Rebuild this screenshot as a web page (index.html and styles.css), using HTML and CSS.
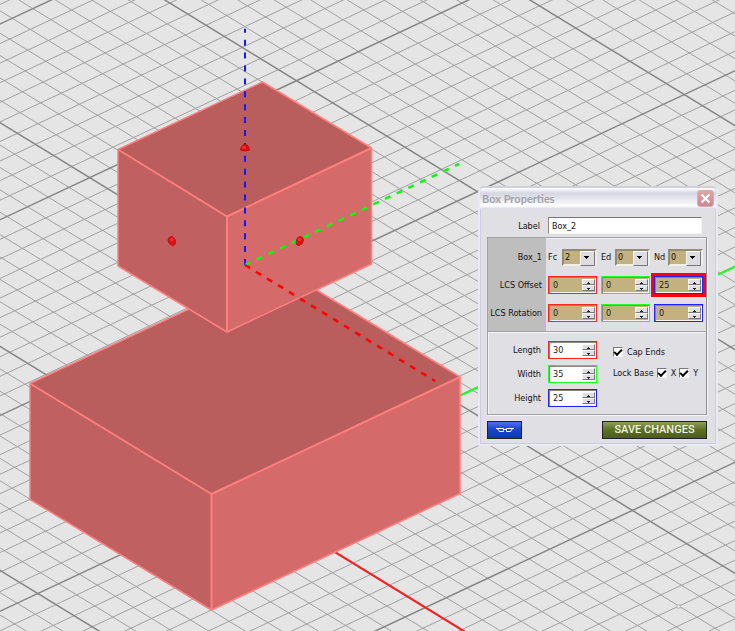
FILE: index.html
```html
<!DOCTYPE html>
<html lang="en">
<head>
<meta charset="utf-8">
<title>Box Properties</title>
<link rel="stylesheet" href="styles.css">
</head>
<body>
<svg class="scene" role="img" aria-label="Two boxes on a construction grid">
  <g transform="matrix(18.09 11.09 20.68 -9.7 89.7 177.7)">
    <path id="minor" class="minor"/>
    <path id="major" class="major"/>
  </g>
  <path class="axis-x" d="M245 497L735 797.4"/>
  <path class="axis-y" d="M425 412L1063 112.7"/>

  <polygon class="top" points="30,383.5 278.5,267 460,377 211.5,494"/>
  <polygon class="left" points="30,383.5 211.5,494 211.5,610 30,499.5"/>
  <polygon class="right" points="211.5,494 460,377 460,493.5 211.5,610"/>
  <path class="outline" d="M30 383.5L278.5 267L460 377V493.5L211.5 610L30 499.5Z"/>
  <path class="edge" d="M30 383.5L211.5 494L460 377M211.5 494V610"/>

  <polygon class="top" points="118,149.5 262.5,82 371.5,148 227,216.5"/>
  <polygon class="left" points="118,149.5 227,216.5 227,332 118,266"/>
  <polygon class="right" points="227,216.5 371.5,148 371.5,264 227,332"/>
  <path class="outline" d="M118 149.5L262.5 82L371.5 148V264L227 332L118 266Z"/>
  <path class="edge" d="M118 149.5L227 216.5L371.5 148M227 216.5V332"/>

  <path class="guide blue" d="M245 265V28.7"/>
  <path class="guide green" d="M245 265L459 164"/>
  <path class="guide red" d="M245 265L435 381"/>

  <g class="handle">
    <path d="M240.5 150C241 146 243 144.500 245 144.500S249 146 249.500 150Q245 152 240.500 150Z"/>
    <path d="M168 240Q168.500 236.500 172 236.500Q175.500 238 175.500 242Q175.500 245.500 172.500 245.500Q168.500 244.500 168 240Z"/>
    <path d="M303.500 240Q303 236.500 299.500 236.500Q296 238 296 242Q296 245.500 299 245.500Q303 244.500 303.500 240Z"/>
  </g>
  <g class="shine">
    <ellipse cx="244" cy="147.500" rx="2" ry="1.300"/>
    <ellipse cx="172" cy="239.500" rx="1.700" ry="1.500"/>
    <ellipse cx="299.500" cy="239.500" rx="1.700" ry="1.500"/>
  </g>
  <rect class="point" x="677" y="605" width="3" height="3"/>
</svg>

<form class="dialog" onsubmit="return false">
  <header class="titlebar">
    <h1>Box Properties</h1>
    <button type="button" class="close" aria-label="Close"><svg viewBox="0 0 17 17"><path d="M4 4L13 13M13 4L4 13"/></svg></button>
  </header>

  <div class="body">
    <div class="name-row">
      <label for="name">Label</label>
      <input id="name" class="text" value="Box_2">
    </div>

    <div class="group">
      <section class="placement">
        <span class="caption">Box_1</span>
        <label class="pick">Fc <span class="drop"><select><option>2</option></select></span></label>
        <label class="pick">Ed <span class="drop"><select><option>0</option></select></span></label>
        <label class="pick">Nd <span class="drop"><select><option>0</option></select></span></label>

        <span class="caption">LCS Offset</span>
        <div class="spin tan x"><input aria-label="Offset X" value="0"><span class="steps"><button type="button" aria-label="Up"></button><button type="button" aria-label="Down"></button></span></div>
        <div class="spin tan y"><input aria-label="Offset Y" value="0"><span class="steps"><button type="button" aria-label="Up"></button><button type="button" aria-label="Down"></button></span></div>
        <div class="spin tan z marked"><input aria-label="Offset Z" value="25"><span class="steps"><button type="button" aria-label="Up"></button><button type="button" aria-label="Down"></button></span></div>

        <span class="caption">LCS Rotation</span>
        <div class="spin tan x"><input aria-label="Rotation X" value="0"><span class="steps"><button type="button" aria-label="Up"></button><button type="button" aria-label="Down"></button></span></div>
        <div class="spin tan y"><input aria-label="Rotation Y" value="0"><span class="steps"><button type="button" aria-label="Up"></button><button type="button" aria-label="Down"></button></span></div>
        <div class="spin tan z"><input aria-label="Rotation Z" value="0"><span class="steps"><button type="button" aria-label="Up"></button><button type="button" aria-label="Down"></button></span></div>
      </section>

      <section class="size">
        <div class="dims">
          <label class="caption" for="len">Length</label>
          <div class="spin x"><input id="len" value="30"><span class="steps"><button type="button" aria-label="Up"></button><button type="button" aria-label="Down"></button></span></div>
          <label class="caption" for="wid">Width</label>
          <div class="spin y"><input id="wid" value="35"><span class="steps"><button type="button" aria-label="Up"></button><button type="button" aria-label="Down"></button></span></div>
          <label class="caption" for="hei">Height</label>
          <div class="spin z"><input id="hei" value="25"><span class="steps"><button type="button" aria-label="Up"></button><button type="button" aria-label="Down"></button></span></div>
        </div>
        <div class="options">
          <label class="check"><input type="checkbox" checked>Cap Ends</label>
          <div class="lock">
            <span>Lock Base</span>
            <label class="check"><input type="checkbox" checked>X</label>
            <label class="check"><input type="checkbox" checked>Y</label>
          </div>
        </div>
      </section>
    </div>

    <footer class="actions">
      <button type="button" class="view" aria-label="Preview"><svg viewBox="0 0 20 8"><path d="M1 2.500H8.500V5.500H4.500L2.500 2.500M19 2.500H11.500V5.500H15.500L17.500 2.500M8 3.500H12"/></svg></button>
      <button type="submit" class="save">SAVE CHANGES</button>
    </footer>
  </div>
</form>
<script src="grid.js"></script>
</body>
</html>
```
FILE: styles.css
```css
* { box-sizing: border-box; }

body {
  margin: 0;
  height: 100vh;
  overflow: hidden;
  background: #e5e5e5;
  color: #111;
  font: 9px/12px "DejaVu Sans Condensed", "DejaVu Sans", sans-serif;
}

.scene { display: block; width: 100%; height: 100%; }
.minor, .major { fill: none; vector-effect: non-scaling-stroke; }
.minor { stroke: #a0a0a0; stroke-width: 1px; }
.major { stroke: #858585; stroke-width: 1.5px; }
.axis-x { stroke: #ff1c1c; stroke-width: 2px; }
.axis-y { stroke: #1cff1c; stroke-width: 2px; }
.top { fill: #ba5d5d; }
.left { fill: #c06060; }
.right { fill: #d46a6a; }
.outline, .edge { fill: none; stroke: #ff7f7f; stroke-linejoin: round; }
.outline { stroke-width: 1.5px; }
.edge { stroke-width: 2px; }
.guide { fill: none; stroke-width: 2px; stroke-dasharray: 6 6.9; }
.blue { stroke: #1414ff; }
.green { stroke: #0f0; stroke-width: 2.5px; }
.red { stroke: #f00; stroke-width: 2.5px; }
.handle { fill: #e01010; stroke: #b81414; stroke-width: 1px; }
.shine { fill: #ff3030; }
.point { fill: #fff; stroke: #b5b5b5; stroke-width: 1px; }

button, input, select { font: inherit; color: inherit; margin: 0; padding: 0; border: 0; border-radius: 0; }

.dialog {
  position: absolute;
  left: 478px;
  top: 186px;
  width: 240px;
  border: 2px solid #e9e9f4;
  border-top-color: #cfcfdd;
  border-radius: 6px 6px 2px 2px;
  background: #e0dfe4;
  box-shadow: inset 0 0 0 1px #cdcde0;
}

.titlebar {
  display: flex;
  align-items: center;
  justify-content: space-between;
  height: 21px;
  padding: 0 2px;
  border-radius: 4px 4px 0 0;
  background: linear-gradient(#fff, #d6d6e2 25%, #e4e4ec 50%, #fff 85%, #d8d8e4);
}
.titlebar h1 { margin: 0; color: #a3a3a8; font: bold 11px/16px Lato, sans-serif; }
.close {
  width: 17px;
  height: 17px;
  border: 1px solid #d8aeb4;
  border-radius: 3px;
  background: linear-gradient(#dda79f, #d4959b 50%, #cc8890);
}
.close svg { display: block; width: 15px; height: 15px; fill: none; stroke: #fff; stroke-width: 2.4px; }

.body { padding: 8px 9px 5px 7px; }
.name-row { display: flex; align-items: center; gap: 8px; padding-right: 5px; }
.name-row label { width: 53px; text-align: right; }
.text {
  flex: 1;
  min-width: 0;
  height: 17px;
  padding-left: 3px;
  border: 1px solid #f4f4ee;
  border-top-color: #777;
  border-left-color: #888;
  background: #fff;
}

.group {
  margin-top: 3px;
  border: 1px solid #a2a2a6;
  border-right-color: #8e8e92;
  box-shadow: 1px 1px 0 #f6f6f6, inset 1px 1px 0 #f1f1f1;
}
.placement {
  display: grid;
  grid-template-columns: 55px repeat(3, 49px);
  column-gap: 4px;
  row-gap: 10px;
  padding: 10px 0 9px 1px;
  border-bottom: 1px solid #a2a2a6;
  box-shadow: 0 1px 0 #f6f6f6;
  background: linear-gradient(#bebebe, #bebebe) 0 0 / 58px 100% no-repeat;
}
.caption { align-self: center; justify-self: end; padding-right: 2px; white-space: nowrap; }
.pick { display: flex; align-items: center; justify-content: space-between; height: 18px; }
.drop { position: relative; width: 35px; height: 17px; }
.drop select {
  display: block;
  width: 35px;
  height: 17px;
  padding-left: 1px;
  appearance: none;
  border: 2px solid #f0f0ea;
  border-top-color: #928c76;
  border-left-color: #928c76;
  background: #c3b27f;
}
.drop::after {
  content: "";
  position: absolute;
  top: 2px;
  right: 2px;
  width: 13px;
  height: 13px;
  border: 1px solid #f8f8f8;
  border-right-color: #77777c;
  border-bottom-color: #77777c;
  background: linear-gradient(#000, #000) 3px 4px / 5px 1px no-repeat, linear-gradient(#000, #000) 4px 5px / 3px 1px no-repeat, linear-gradient(#000, #000) 5px 6px / 1px 1px no-repeat, #dcdce2;
  pointer-events: none;
}

.spin {
  display: flex;
  width: 49px;
  height: 18px;
  border: 1px solid;
  box-shadow: inset 1px 1px 0 #8a877e, inset -1px -1px 0 #f4f4f4;
  padding: 2px 1px 2px 2px;
  background: #fff;
}
.spin.tan { background: #c3b27f; }
.spin.x { border-color: #f22; }
.spin.y { border-color: #2f2; }
.spin.z { border-color: #22f; }
.spin input { flex: 1; min-width: 0; width: 0; padding-left: 2px; background: none; color: #222; outline: none; }
.steps { display: flex; flex-direction: column; width: 13px; }
.steps button {
  flex: 1;
  border: 1px solid #fafafa;
  border-right-color: #77777c;
  border-bottom-color: #77777c;
  background: linear-gradient(#222, #222) 5px 2px / 1px 1px no-repeat, linear-gradient(#222, #222) 4px 3px / 3px 1px no-repeat, #dedee4;
}
.steps button + button { background-position: 5px 3px, 4px 2px, 0 0; }
.marked { outline: 3px solid #ff0010; }

.size { display: flex; gap: 16px; padding: 9px 0 7px 1px; }
.dims { display: grid; grid-template-columns: 54px 49px; column-gap: 5px; row-gap: 6px; }
.options { padding-top: 5px; }
.check { display: flex; align-items: center; gap: 4px; }
.lock { display: flex; align-items: center; gap: 3px; margin-top: 9px; white-space: nowrap; }
.check input {
  appearance: none;
  width: 10px;
  height: 10px;
  border: 1px solid #f4f4f4;
  border-top-color: #77777c;
  border-left-color: #77777c;
  background: #fff;
  display: grid;
  place-items: center;
}
.check input:checked::after {
  content: "";
  width: 6px;
  height: 3px;
  border: solid #000;
  border-width: 0 0 2px 2px;
  transform: translateY(-1px) rotate(-45deg);
}

.actions { display: flex; justify-content: space-between; margin-top: 6px; }
.actions button { height: 18px; border: 1px solid #222; }
.view { width: 35px; background: linear-gradient(#4a72e8, #1c44cc 45%, #0c34be); }
.view svg { display: block; width: 20px; height: 8px; margin: 0 auto; fill: none; stroke: #fff; stroke-width: 1px; }
.actions .save {
  width: 105px;
  background: linear-gradient(#8e9c5c, #5c7020 50%, #4c5e14);
  color: #f0f0e4;
  font: 500 11px/16px Roboto, sans-serif;
}
```
FILE: grid.js
```js
// Grid coordinates: one unit per cell, a heavier line every tenth cell.
const cells = 60;
const paths = { minor: "", major: "" };
for (let i = -cells; i <= cells; i++) {
  const kind = i % 10 === 0 ? "major" : "minor";
  paths[kind] += `M${i} ${-cells}V${cells}M${-cells} ${i}H${cells}`;
}
document.getElementById("minor").setAttribute("d", paths.minor);
document.getElementById("major").setAttribute("d", paths.major);
```
